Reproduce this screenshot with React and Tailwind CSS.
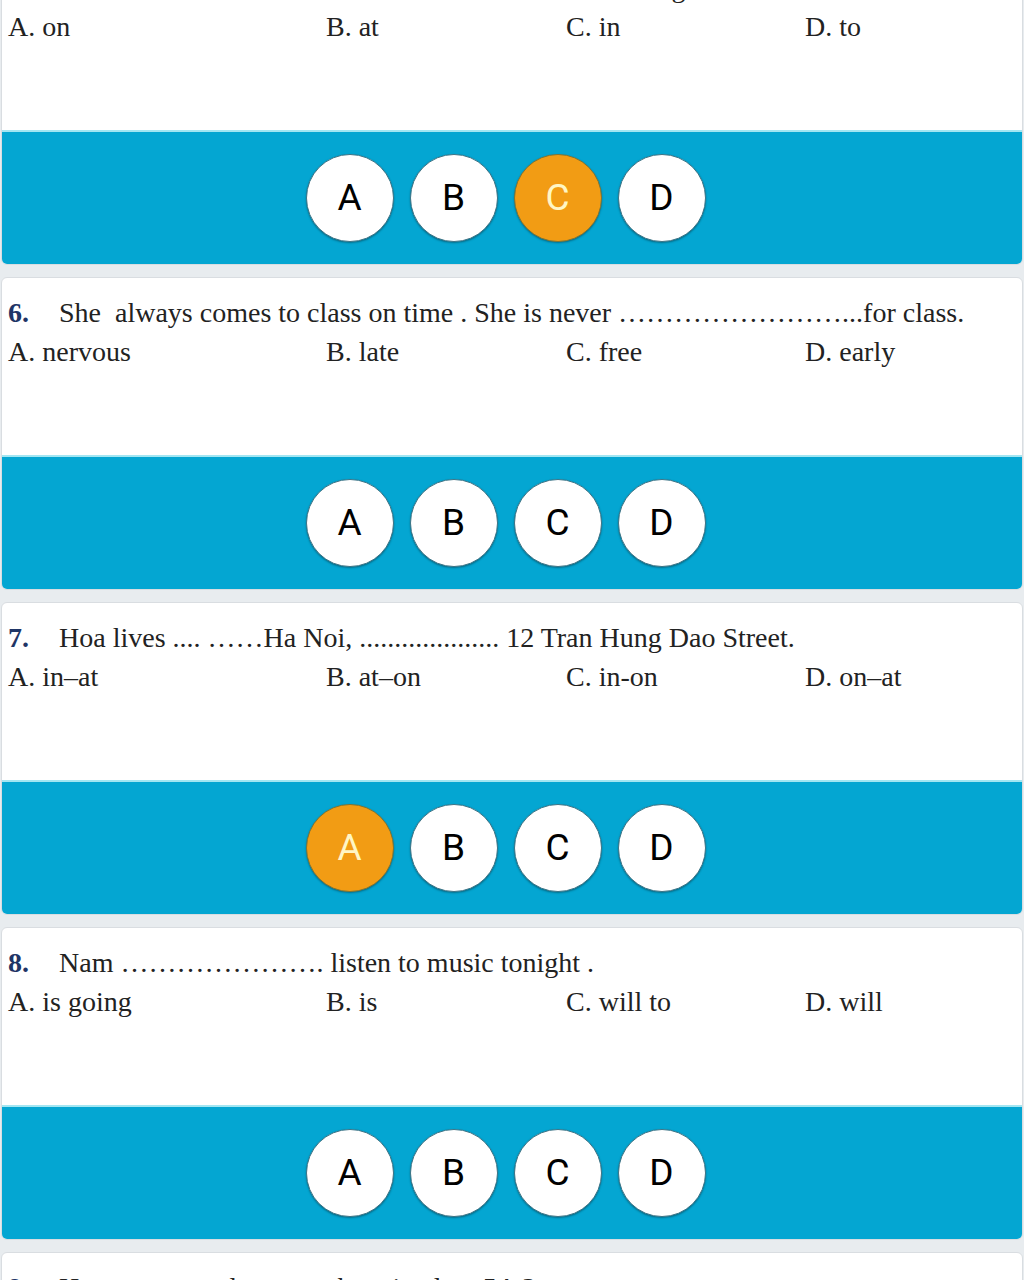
const QUESTIONS = [
  {
    num: '5.',
    text: 'We often watch TV at home ……………… the evening.',
    options: ['A. on', 'B. at', 'C. in', 'D. to'],
    picked: 'C',
  },
  {
    num: '6.',
    text: 'She  always comes to class on time . She is never ……………………...for class.',
    options: ['A. nervous', 'B. late', 'C. free', 'D. early'],
    picked: null,
  },
  {
    num: '7.',
    text: 'Hoa lives .... ……Ha Noi, .................... 12 Tran Hung Dao Street.',
    options: ['A. in–at', 'B. at–on', 'C. in-on', 'D. on–at'],
    picked: 'A',
  },
  {
    num: '8.',
    text: 'Nam …………………. listen to music tonight .',
    options: ['A. is going', 'B. is', 'C. will to', 'D. will'],
    picked: null,
  },
  {
    num: '9.',
    text: 'How many students are there in class 5A ?',
    options: ['A. 25', 'B. 30', 'C. 35', 'D. 40'],
    picked: null,
  },
];

const serif = { fontFamily: '"Liberation Serif", "Times New Roman", serif' };

function AnswerBubble({ letter, active }) {
  return (
    <div
      className={`w-[88px] h-[88px] rounded-full border flex items-center justify-center shadow-[0_1px_2px_rgba(0,0,0,0.35)] ${
        active ? 'bg-[#f29c14] border-[#7f7434] text-[#fff6c4]' : 'bg-white border-[#3d7486] text-black'
      }`}
    >
      <span className="text-[37px] leading-none" style={{ fontFamily: 'Roboto, "Noto Sans", sans-serif' }}>
        {letter}
      </span>
    </div>
  );
}

function QuestionCard({ q }) {
  return (
    <div className="h-[313px] rounded-md border border-[#d9dde1] bg-white overflow-hidden flex flex-col">
      <div className="h-[177px] pt-[15px] pl-[6px] text-[28px] leading-[39px] text-[#222]" style={serif}>
        <p className="whitespace-pre">
          <span className="inline-block w-[51px] font-bold text-[#1f3566]">{q.num}</span>
          {q.text}
        </p>
        <div className="grid grid-cols-[318px_240px_239px_1fr]">
          {q.options.map((o) => (
            <span key={o}>{o}</span>
          ))}
        </div>
      </div>
      <div className="flex-1 bg-[#04a6d2] border-t-2 border-[#a3e6f2] flex items-center justify-center gap-4 pr-[13px] pb-px">
        {['A', 'B', 'C', 'D'].map((l) => (
          <AnswerBubble key={l} letter={l} active={q.picked === l} />
        ))}
      </div>
    </div>
  );
}

export default function App() {
  return (
    <div className="w-[1024px] h-[1280px] overflow-hidden bg-[#e8ecef]">
      <div className="-mt-[48px] px-px flex flex-col gap-3">
        {QUESTIONS.map((q) => (
          <QuestionCard key={q.num} q={q} />
        ))}
      </div>
    </div>
  );
}
